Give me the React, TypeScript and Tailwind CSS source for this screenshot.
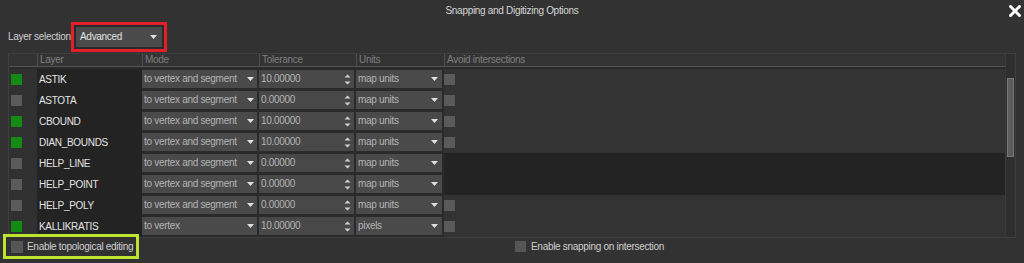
import React from 'react';

type Row = {
  name: string;
  on: boolean;
  mode: string;
  tol: string;
  units: string;
  avoid: boolean;
};

const ROWS: Row[] = [
  { name: 'ASTIK', on: true, mode: 'to vertex and segment', tol: '10.00000', units: 'map units', avoid: true },
  { name: 'ASTOTA', on: false, mode: 'to vertex and segment', tol: '0.00000', units: 'map units', avoid: true },
  { name: 'CBOUND', on: true, mode: 'to vertex and segment', tol: '10.00000', units: 'map units', avoid: true },
  { name: 'DIAN_BOUNDS', on: true, mode: 'to vertex and segment', tol: '10.00000', units: 'map units', avoid: true },
  { name: 'HELP_LINE', on: false, mode: 'to vertex and segment', tol: '0.00000', units: 'map units', avoid: false },
  { name: 'HELP_POINT', on: false, mode: 'to vertex and segment', tol: '0.00000', units: 'map units', avoid: false },
  { name: 'HELP_POLY', on: false, mode: 'to vertex and segment', tol: '0.00000', units: 'map units', avoid: true },
  { name: 'KALLIKRATIS', on: true, mode: 'to vertex', tol: '10.00000', units: 'pixels', avoid: true },
];

const HEADERS = ['', 'Layer', 'Mode', 'Tolerance', 'Units', 'Avoid intersections'];

function Arrow() {
  return (
    <svg width="7" height="4" viewBox="0 0 7 4" className="shrink-0">
      <path d="M0 0h7L3.5 4z" fill="#e0e0e0" />
    </svg>
  );
}

function Spin() {
  return (
    <svg width="7" height="13" viewBox="0 0 7 13" className="shrink-0">
      <path d="M0.5 4.5h6L3.5 1.5z" fill="#cfcfcf" />
      <path d="M0.5 8.5h6L3.5 11.5z" fill="#cfcfcf" />
    </svg>
  );
}

function Check({ on }: { on: boolean }) {
  return (
    <div className={on ? 'w-[11px] h-[11px] bg-[#138a13]' : 'w-[11px] h-[11px] bg-[#5a5a5a]'} />
  );
}

export default function App() {
  return (
    <div
      className="w-[1024px] h-[263px] bg-[#323232] flex flex-col overflow-hidden text-[10px] leading-none tracking-[-0.3px] whitespace-nowrap"
      style={{ fontFamily: '"Liberation Sans", Arial, sans-serif' }}>

      {/* title bar */}
      <div className="h-[21px] flex items-center">
        <div className="w-[40px]" />
        <div className="flex-1 text-center text-[#d6d6d6]">Snapping and Digitizing Options</div>
        <div className="w-[40px] flex justify-end pr-[3px]">
          <svg width="12" height="12" viewBox="0 0 12 12">
            <path d="M1.5 1.5l9 9M10.5 1.5l-9 9" stroke="#ffffff" strokeWidth="3" strokeLinecap="square" />
          </svg>
        </div>
      </div>

      {/* layer selection */}
      <div className="h-[31px] flex items-center pl-[8px]">
        <span className="text-[#cfcfcf] w-[63px]">Layer selection</span>
        <div className="border-[3px] border-[#e3202a] p-[2px] bg-[#2a2a2a]">
          <div className="w-[86px] h-[20px] bg-[#4a4a4a] flex items-center justify-between pl-[4px] pr-[5px] text-[#e2e2e2]">
            <span>Advanced</span>
            <Arrow />
          </div>
        </div>
      </div>

      {/* table */}
      <div className="mt-[1px] mx-[8px] h-[185px] border border-[#3e3e3e] flex">
        <div className="flex-1 flex flex-col">
          <div className="grid grid-cols-[28px_105px_117px_97px_88px_1fr] h-[13px] border-b border-[#555555]">
            {HEADERS.map((h, i) =>
              <div key={i} className={i === 0 ? 'bg-[#333333]' : 'bg-[#333333] border-l border-[#4f4f4f] text-[#7f7f7f] pl-[2px] flex items-center'}>
                {h}
              </div>
            )}
          </div>
          <div className="flex flex-col pt-[2px] bg-[#2a2a2a]">
            {ROWS.map((r) =>
              <div key={r.name} className="grid grid-cols-[28px_105px_117px_97px_88px_1fr] h-[21px]">
                <div className="flex items-center pl-[2px] bg-[#303030]">
                  <Check on={r.on} />
                </div>
                <div className="bg-[#232323] flex items-center pl-[2px] text-[#e4e4e4]">{r.name}</div>
                <div className="bg-[#2a2a2a] pt-[1px] pr-[2px]">
                  <div className="h-[18px] bg-[#4a4a4a] flex items-center justify-between pl-[2px] pr-[3px] text-[#b4b4b4]">
                    <span>{r.mode}</span>
                    <Arrow />
                  </div>
                </div>
                <div className="bg-[#2a2a2a] pt-[1px] pr-[2px]">
                  <div className="h-[18px] bg-[#484848] flex items-center justify-between pl-[2px] pr-[3px] text-[#b4b4b4]">
                    <span>{r.tol}</span>
                    <Spin />
                  </div>
                </div>
                <div className="bg-[#2a2a2a] pt-[1px] pr-[2px]">
                  <div className="h-[18px] bg-[#4a4a4a] flex items-center justify-between pl-[2px] pr-[4px] text-[#b4b4b4]">
                    <span>{r.units}</span>
                    <Arrow />
                  </div>
                </div>
                {r.avoid ?
                  <div className="bg-[#333333] pt-[5px]">
                    <Check on={false} />
                  </div> :
                  <div className="bg-[#232323]" />
                }
              </div>
            )}
          </div>
        </div>

        {/* scrollbar */}
        <div className="w-[10px] bg-[#2e2e2e] border-l border-[#3a3a3a] flex flex-col pt-[24px] px-[1px]">
          <div className="h-[79px] bg-[#5c5c5c] border border-[#777777]" />
        </div>
      </div>

      {/* bottom options */}
      <div className="flex items-start -mt-[4px]">
        <div className="ml-[3px] border-[3px] border-[#bde52f] h-[25px] w-[136px] flex items-center gap-[4px] pl-[5px] bg-[#313131]">
          <div className="w-[12px] h-[12px] bg-[#555555]" />
          <span className="text-[#cfcfcf]">Enable topological editing</span>
        </div>
        <div className="ml-[376px] mt-[7px] flex items-center gap-[5px]">
          <div className="w-[11px] h-[11px] bg-[#555555]" />
          <span className="text-[#cfcfcf]">Enable snapping on intersection</span>
        </div>
      </div>
    </div>
  );
}
